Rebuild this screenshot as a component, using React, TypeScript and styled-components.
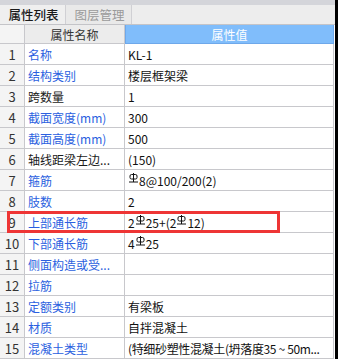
import React from 'react';
import styled, { createGlobalStyle } from 'styled-components';

const GlobalStyle = createGlobalStyle`
  html, body {
    margin: 0;
    padding: 0;
    background: #000;
  }
  body {
    font-family: "Microsoft YaHei", "Noto Sans CJK SC", "Noto Sans", sans-serif;
    font-size: 12px;
    color: #222;
  }
`;

const Styled = {
  Window: styled.div`
    display: flex;
    width: 338px;
    height: 359px;
    overflow: hidden;
    background: #000;
  `,
  Panel: styled.div`
    width: 335px;
    display: flex;
    flex-direction: column;
    background: #fff;
  `,
  TopStrip: styled.div`
    height: 6px;
    background: #d4d5da;
  `,
  TabBar: styled.div`
    display: flex;
    height: 22px;
    background: #ededed;
    border-bottom: 1px solid #c4c4c8;
  `,
  Tab: styled.div<{ $active?: boolean }>`
    width: 66px;
    display: flex;
    align-items: center;
    justify-content: center;
    padding-left: 2px;
    box-sizing: border-box;
    font-size: 12.5px;
    font-weight: ${(p) => (p.$active ? 500 : 400)};
    color: ${(p) => (p.$active ? '#1a1a1a' : '#9a9a9a')};
    background: ${(p) => (p.$active ? '#efefef' : '#e9e9e9')};
    border-right: 1px solid #d0d0d4;
  `,
  Table: styled.div`
    display: flex;
    flex-direction: column;
  `,
  Row: styled.div<{ $header?: boolean; $marked?: boolean }>`
    position: relative;
    display: grid;
    grid-template-columns: 25px 100px 209px;
    height: ${(p) => (p.$header ? '19px' : '21px')};
    &::after {
      content: '';
      display: ${(p) => (p.$marked ? 'block' : 'none')};
      position: absolute;
      left: 7px;
      top: -1px;
      width: 273px;
      height: 22px;
      box-sizing: border-box;
      border: 3px solid #ee3535;
    }
  `,
  IndexCell: styled.div`
    display: flex;
    align-items: center;
    justify-content: center;
    background: #f4f4f4;
    border-right: 1px solid #c8c8cc;
    border-bottom: 1px solid #c8c8cc;
    color: #333;
    font-size: 13px;
  `,
  HeadName: styled.div`
    display: flex;
    align-items: center;
    justify-content: center;
    background: #ececec;
    border-right: 1px solid #c8c8cc;
    border-bottom: 1px solid #c8c8cc;
    color: #333;
  `,
  HeadValue: styled.div`
    display: flex;
    align-items: center;
    justify-content: center;
    background: #80bdfb;
    border: 1px solid #6ea8ea;
    border-top: none;
    color: #fff;
  `,
  NameCell: styled.div<{ $plain?: boolean }>`
    display: flex;
    align-items: center;
    padding-left: 3px;
    white-space: nowrap;
    overflow: hidden;
    color: ${(p) => (p.$plain ? '#1a1a1a' : '#2b5fe0')};
    border-right: 1px solid #c8c8cc;
    border-bottom: 1px solid #c8c8cc;
  `,
  ValueCell: styled.div<{ $tight?: boolean }>`
    display: flex;
    align-items: center;
    padding-left: 3px;
    white-space: nowrap;
    overflow: hidden;
    color: #111;
    letter-spacing: ${(p) => (p.$tight ? '-0.35px' : '0')};
    border-right: 1px solid #c8c8cc;
    border-bottom: 1px solid #c8c8cc;
    min-width: 0;
  `,
  Rebar: styled.svg`
    width: 9px;
    height: 10px;
    margin: 0 1px;
    position: relative;
    top: -2px;
    flex-shrink: 0;
  `,
};

function Rebar() {
  return (
    <Styled.Rebar viewBox="0 0 9 10">
      <rect x="1" y="1.5" width="7" height="4.5" rx="1.5" fill="none" stroke="#111" strokeWidth="1" />
      <line x1="4.5" y1="0" x2="4.5" y2="9" stroke="#111" strokeWidth="1" />
      <line x1="0" y1="9" x2="9" y2="9" stroke="#111" strokeWidth="1" />
    </Styled.Rebar>
  );
}

type Part = string | 'R';

const rows: { name: string; plain?: boolean; tight?: boolean; value: Part[] }[] = [
  { name: '名称', value: ['KL-1'] },
  { name: '结构类别', value: ['楼层框架梁'] },
  { name: '跨数量', plain: true, value: ['1'] },
  { name: '截面宽度(mm)', value: ['300'] },
  { name: '截面高度(mm)', value: ['500'] },
  { name: '轴线距梁左边...', plain: true, value: ['(150)'] },
  { name: '箍筋', value: ['R', '8@100/200(2)'] },
  { name: '肢数', value: ['2'] },
  { name: '上部通长筋', value: ['2', 'R', '25+(2', 'R', '12)'] },
  { name: '下部通长筋', value: ['4', 'R', '25'] },
  { name: '侧面构造或受...', value: [] },
  { name: '拉筋', value: [] },
  { name: '定额类别', value: ['有梁板'] },
  { name: '材质', value: ['自拌混凝土'] },
  { name: '混凝土类型', tight: true, value: ['(特细砂塑性混凝土(坍落度35 ~ 50m...'] },
];

export default function App() {
  return (
    <>
      <GlobalStyle />
      <Styled.Window>
        <Styled.Panel>
          <Styled.TopStrip />
          <Styled.TabBar>
            <Styled.Tab $active>属性列表</Styled.Tab>
            <Styled.Tab>图层管理</Styled.Tab>
          </Styled.TabBar>
          <Styled.Table>
            <Styled.Row $header>
              <Styled.IndexCell />
              <Styled.HeadName>属性名称</Styled.HeadName>
              <Styled.HeadValue>属性值</Styled.HeadValue>
            </Styled.Row>
            {rows.map((row, i) => (
              <Styled.Row key={i} $marked={i === 8}>
                <Styled.IndexCell>{i + 1}</Styled.IndexCell>
                <Styled.NameCell $plain={row.plain}>{row.name}</Styled.NameCell>
                <Styled.ValueCell $tight={row.tight}>
                  {row.value.map((part, j) =>
                    part === 'R' ? <Rebar key={j} /> : <span key={j}>{part}</span>
                  )}
                </Styled.ValueCell>
              </Styled.Row>
            ))}
          </Styled.Table>
        </Styled.Panel>
      </Styled.Window>
    </>
  );
}
